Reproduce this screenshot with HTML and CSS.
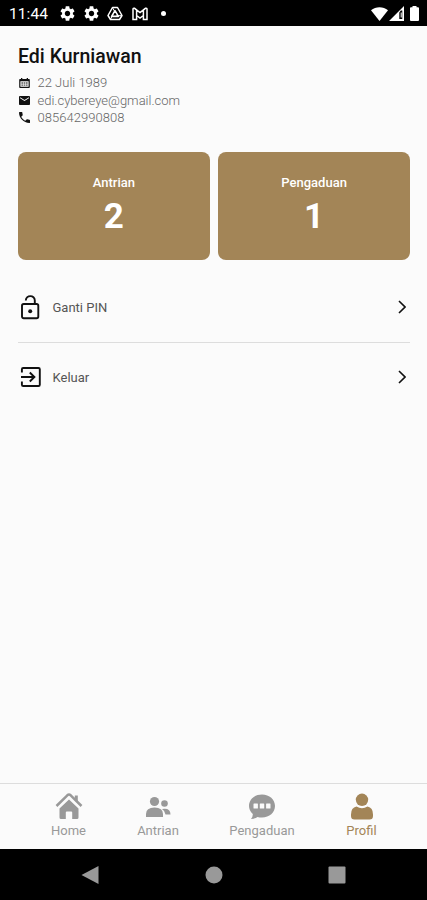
FILE: index.html
```html
<!DOCTYPE html>
<html lang="id">
<head>
<meta charset="utf-8">
<title>Profil</title>
<link rel="stylesheet" href="styles.css">
</head>
<body>
<svg class="defs" aria-hidden="true">
  <symbol id="gear" viewBox="2 2 20 20"><path d="M19.14 12.94c.04-.3.06-.61.06-.94s-.02-.64-.07-.94l2.03-1.58c.18-.14.23-.41.12-.61l-1.92-3.32c-.12-.22-.37-.29-.59-.22l-2.39.96c-.5-.38-1.03-.7-1.62-.94L14.4 2.81c-.04-.24-.24-.41-.48-.41h-3.84c-.24 0-.43.17-.47.41l-.36 2.54c-.59.24-1.13.57-1.62.94l-2.39-.96c-.22-.08-.47 0-.59.22L2.740 8.870c-.12.210-.08.470.12.610l2.030 1.580c-.05.300-.09.630-.09.940s.02.640.07.940l-2.030 1.580c-.18.140-.23.410-.12.610l1.920 3.320c.12.220.37.290.59.220l2.390-.96c.5.380 1.030.700 1.620.940l.36 2.540c.05.240.24.410.48.410h3.840c.24 0 .44-.17.47-.41l.36-2.540c.59-.24 1.130-.56 1.620-.94l2.390.96c.22.080.47 0 .59-.22l1.920-3.320c.12-.22.07-.47-.12-.61l-2.010-1.580zM12 15.600c-1.980 0-3.600-1.620-3.600-3.600s1.620-3.600 3.600-3.600 3.600 1.620 3.600 3.600-1.620 3.600-3.600 3.600z"/></symbol>
  <symbol id="chevron" viewBox="0 0 8 14"><path d="M1 1l6 6-6 6" fill="none" stroke="currentColor" stroke-width="1.6"/></symbol>
</svg>
<header class="status">
  <span class="clock">11:44</span>
  <div class="notices">
    <svg width="15" height="15"><use href="#gear"/></svg>
    <svg width="15" height="15"><use href="#gear"/></svg>
    <svg width="16" height="15" viewBox="0 0 16 15"><g fill="none" stroke="currentColor" stroke-linejoin="round"><path d="M5.500 1.500h5l4.500 8-2.500 4h-9L1 9.500z" stroke-width="1.500"/><path d="M8 4.600l3.400 5.800H4.600z" stroke-width="1.600"/><path d="M5.500 1.800l3 5M14.700 9.700H9.500M3.500 13.200l2.600-4.600" stroke-width="1"/></g></svg>
    <svg width="16" height="14" viewBox="0 0 16 14"><path d="M1 2.300q0-1.300 1.500-1L8 5.500l5.500-4.200q1.500-.3 1.500 1V12.500h-3.600V8.500L8 11 4.600 8.500v4H1zM4.600 3v5.500M11.400 3v5.500" fill="none" stroke="currentColor" stroke-width="1.500"/></svg>
    <span class="dot"></span>
  </div>
  <div class="signals">
    <svg width="17" height="14" viewBox="0 0 17 14"><path d="M0 3.300C4.700-.8 12.300-.8 17 3.300L8.500 14z"/></svg>
    <svg width="15" height="15" viewBox="0 0 15 15"><path fill-rule="evenodd" d="M15 0v15H0zM10.300 6.500v6.500h3V4.500h-1.500z"/><path d="M11.700 6.500h1v5h-1z"/></svg>
    <svg width="9" height="15" viewBox="0 0 9 15"><path d="M2.500 1.200V0h4v1.200H8q1 0 1 1V14q0 1-1 1H1q-1 0-1-1V2.200q0-1 1-1z"/></svg>
  </div>
</header>
<main class="page">
  <h1 class="name">Edi Kurniawan</h1>
  <ul class="details">
    <li><svg width="11" height="10" viewBox="0 0 11 11" preserveAspectRatio="none"><path fill-rule="evenodd" d="M2 0h1.300v1h4.400V0H9v1h1q.8 0 .8.800V10q0 1-.8 1H1q-.8 0-.8-1V1.800Q.2 1 1 1h1zM1.400 3.700v6h8.200v-6z"/><path opacity=".7" d="M2.400 4.700h1.700v1.500H2.400zm2.300 0h1.600v1.500H4.700zm2.200 0h1.700v1.500H6.900zM2.400 7.100h1.700v1.500H2.400zm2.300 0h1.600v1.500H4.700zm2.200 0h1.700v1.500H6.900z"/></svg><span>22 Juli 1989</span></li>
    <li><svg width="11" height="9" viewBox="2 4 20 16" preserveAspectRatio="none"><path d="M20 4H4c-1.100 0-2 .9-2 2v12c0 1.100.9 2 2 2h16c1.100 0 2-.9 2-2V6c0-1.100-.9-2-2-2zm0 4l-8 5-8-5V6l8 5 8-5z"/></svg><span>edi.cybereye@gmail.com</span></li>
    <li><svg width="11" height="11" viewBox="3 3 18 18"><path d="M6.620 10.790c1.440 2.830 3.760 5.140 6.590 6.590l2.200-2.200c.27-.27.67-.36 1.020-.24 1.120.37 2.330.57 3.570.57.55 0 1 .45 1 1V20c0 .55-.45 1-1 1-9.390 0-17-7.610-17-17 0-.55.45-1 1-1h3.500c.55 0 1 .45 1 1 0 1.250.2 2.450.57 3.570.11.350.03.740-.25 1.020z"/></svg><span class="phone">085642990808</span></li>
  </ul>
  <section class="cards">
    <div class="card"><span class="card-label">Antrian</span><strong>2</strong></div>
    <div class="card"><span class="card-label">Pengaduan</span><strong>1</strong></div>
  </section>
  <div class="row">
    <svg width="24" height="26" viewBox="0 0 24 26"><g fill="none" stroke="currentColor" stroke-width="1.900"><rect x="4" y="10" width="16.300" height="14.300" rx="1.700"/><path d="M7.800 6.500C8 .8 16.800.6 16.800 6.500V10"/></g><circle cx="12.200" cy="17.300" r="2"/></svg>
    <span class="row-label">Ganti PIN</span>
    <svg class="chevron" width="8" height="14"><use href="#chevron"/></svg>
  </div>
  <div class="row">
    <svg width="24" height="24" viewBox="0 0 24 24"><g fill="none" stroke="currentColor" stroke-width="1.900"><path d="M3.900 7.500V4.300q0-1.300 1.300-1.300h15.300q1.300 0 1.300 1.300v15.400q0 1.300-1.300 1.300H5.200q-1.300 0-1.300-1.300v-3.200M3 12h13M11.800 7.500l4.600 4.500-4.600 4.500"/></g></svg>
    <span class="row-label">Keluar</span>
    <svg class="chevron" width="8" height="14"><use href="#chevron"/></svg>
  </div>
</main>
<nav class="tabs">
  <a class="tab"><svg width="28" height="28" viewBox="0 0 28 28"><path d="M1.500 14L12.300 3.300q1.700-1.500 3.400 0L26.500 14" fill="none" stroke="currentColor" stroke-width="2.500"/><path d="M19.800 3.500h3V11l-3-3zM14 7.500l9.500 9v9q0 1.500-1.500 1.500h-4.800v-6.500q0-1-1-1h-4.400q-1 0-1 1V27H6q-1.500 0-1.500-1.500v-9z"/></svg><span>Home</span></a>
  <a class="tab"><svg width="28" height="28" viewBox="0 0 28 28"><circle cx="10.500" cy="9.500" r="4.600"/><circle cx="20.500" cy="11.500" r="3.300"/><path d="M2 25v-3q0-6.500 8.500-6.500T19 22v3zM18 17q8.500-1.500 8.500 5.500h-5q-.3-3.500-3.500-5.500z"/></svg><span>Antrian</span></a>
  <a class="tab"><svg width="28" height="28" viewBox="0 0 28 28"><path fill-rule="evenodd" d="M14 2.500c7.500 0 13 5 13 11.500S21.500 25.500 14 25.500q-2.500 0-4.500-.6Q6.500 27 3 27q2-2.500 1.800-5Q1 18.600 1 14C1 7.500 6.500 2.500 14 2.500zM5.500 12.100v3.800q0 .5.500.5h3.400q.5 0 .5-.5v-3.800q0-.5-.5-.5H6q-.5 0-.5.500zm6.300 0v3.800q0 .5.500.5h3.400q.5 0 .5-.5v-3.800q0-.5-.5-.5h-3.400q-.5 0-.5.500zm6.300 0v3.800q0 .5.500.5H22q.5 0 .5-.5v-3.800q0-.5-.5-.5h-3.400q-.5 0-.5.500z"/></svg><span>Pengaduan</span></a>
  <a class="tab active"><svg width="28" height="28" viewBox="0 0 28 28"><circle cx="14" cy="7.800" r="6.200"/><path d="M8.500 14.500q5.500 3.500 11 0 5.500 1 5.500 8v1.500q0 3.500-3.500 3.500h-15Q3 27.500 3 24v-1.500q0-7 5.500-8z"/></svg><span>Profil</span></a>
</nav>
<footer class="system">
  <svg width="18" height="20" viewBox="0 0 18 20"><path d="M17.500 1v18L.5 10z"/></svg>
  <svg width="18" height="18" viewBox="0 0 18 18"><circle cx="9" cy="9" r="8.500"/></svg>
  <svg width="18" height="18" viewBox="0 0 18 18"><rect x=".5" y=".5" width="17" height="17" rx="1"/></svg>
</footer>
</body>
</html>
```
FILE: styles.css
```css
* { box-sizing: border-box; }
body {
  margin: 0;
  height: 900px;
  display: flex;
  flex-direction: column;
  overflow: hidden;
  background: #fbfbfb;
  color: #111;
  font-family: Roboto, "Liberation Sans", sans-serif;
}
svg { display: block; flex: none; fill: currentColor; }
.defs { position: absolute; width: 0; height: 0; }
.status {
  display: flex;
  align-items: center;
  height: 26px;
  padding: 1px 8px 0 9px;
  background: #000;
  color: #fff;
}
.clock { width: 50.5px; padding-top: 1px; font-size: 15.5px; letter-spacing: .1px; }
.notices { display: flex; align-items: center; gap: 9px; }
.notices svg:nth-child(3) { margin-left: -1px; }
.dot { width: 5px; height: 5px; margin-left: 4px; border-radius: 50%; background: #fff; }
.signals { display: flex; align-items: center; margin-left: auto; }
.signals svg + svg { margin-left: 1px; }
.signals svg:last-child { margin-left: 6px; }
.page { flex: 1; padding: 19px 17px 0 18px; }
.name { margin: 0; font-size: 19.5px; line-height: 24px; font-weight: 500; }
.details {
  margin: 5px 0 0;
  padding: 0;
  list-style: none;
  font-size: 13px;
  line-height: 17.5px;
  font-weight: 300;
  color: #666;
}
.details li { display: flex; align-items: center; height: 17.5px; padding-left: 1px; gap: 7.5px; }
.details svg { color: #111; }
.phone { letter-spacing: .05px; }
.cards { display: grid; grid-template-columns: 1fr 1fr; gap: 8.5px; margin-top: 25px; }
.card {
  display: flex;
  flex-direction: column;
  align-items: center;
  height: 108px;
  padding-top: 23.5px;
  border-radius: 8px;
  background: #a38557;
  color: #fff;
}
.card-label { font-size: 13px; line-height: 16px; font-weight: 500; }
.card strong { font-size: 35px; line-height: 41px; font-weight: 700; margin-top: 5px; }
.row { display: flex; align-items: center; height: 69px; }
.cards + .row { height: 83px; padding-top: 13px; border-bottom: 1px solid #ddd; }
.row-label { margin-left: 10.5px; font-size: 13px; color: #555; }
.chevron { margin: 0 4px 0 auto; }
.tabs {
  display: grid;
  grid-template-columns: 91px 88px 120px 79px;
  height: 66px;
  padding: 8px 0 0 23px;
  border-top: 1px solid #ddd;
  color: #999;
}
.tab { display: flex; flex-direction: column; align-items: center; font-size: 13px; line-height: 16px; }
.tab svg { margin-bottom: 3px; }
.active { color: #a38557; }
.system {
  display: flex;
  align-items: center;
  gap: 105px;
  height: 51px;
  padding-left: 81px;
  background: #000;
  color: #999;
}
.system svg:nth-child(2) { margin-left: 1px; }
```
